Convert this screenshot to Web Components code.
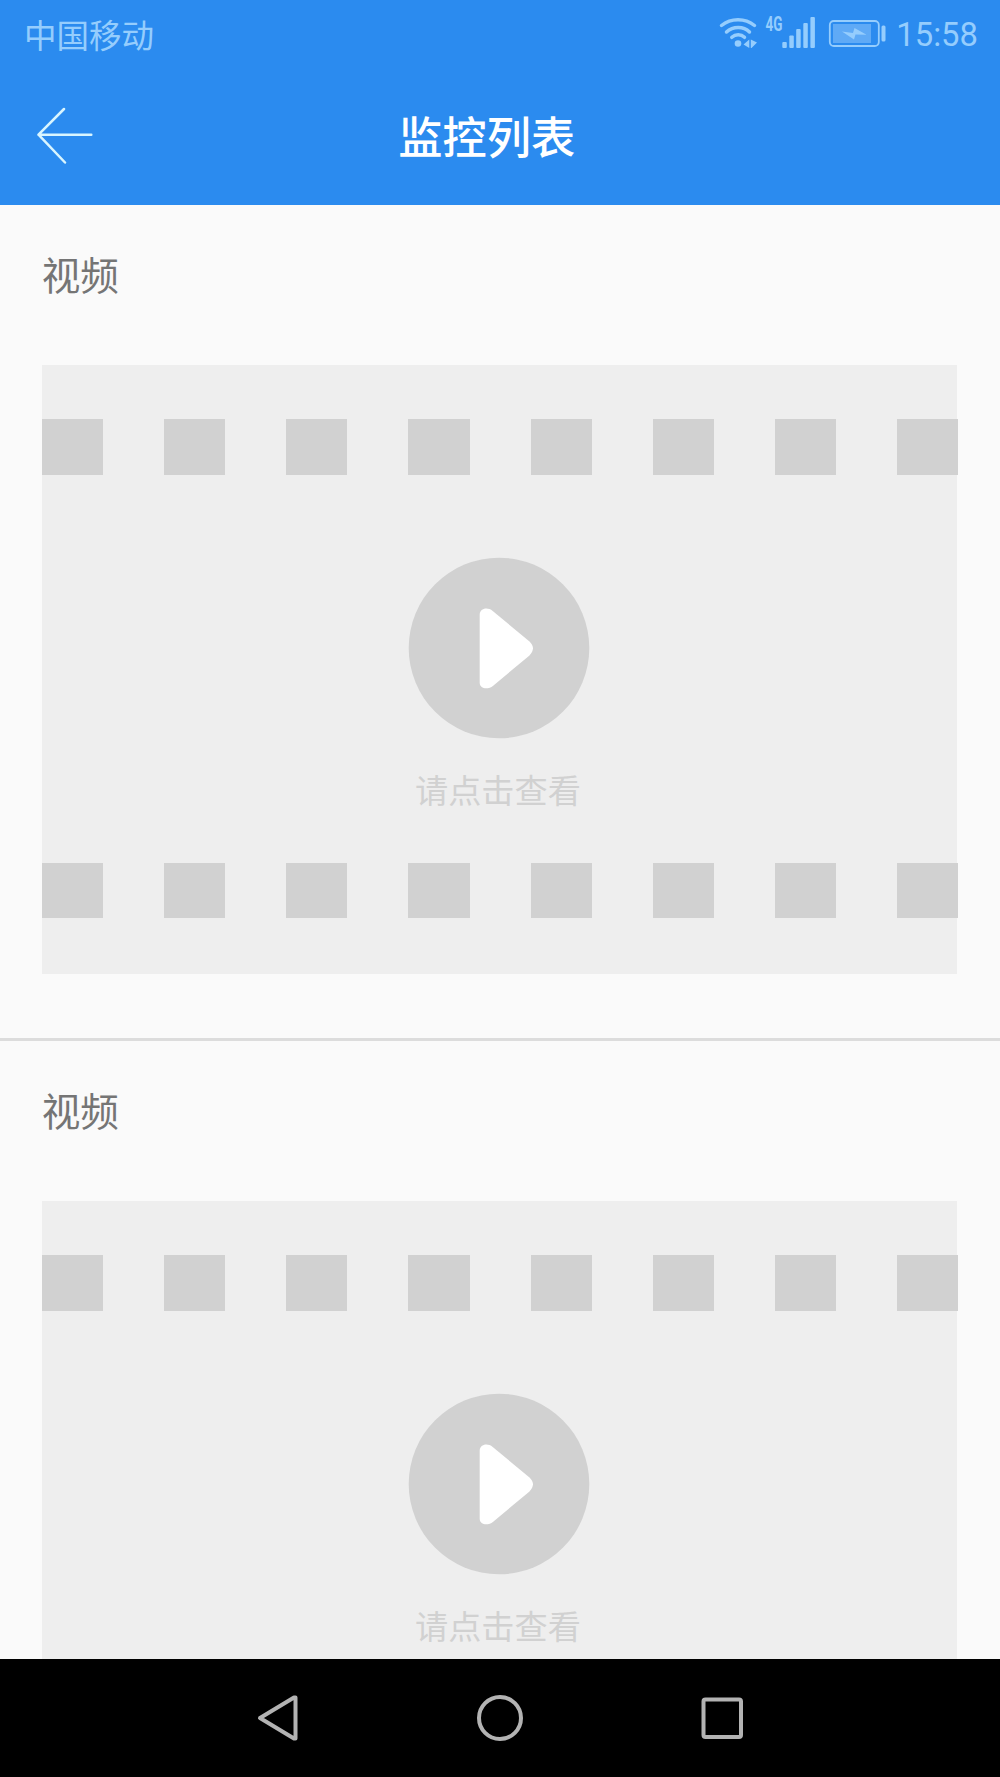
<!DOCTYPE html>
<html lang="zh-CN">
<head>
<meta charset="utf-8">
<title>监控列表</title>
<style>
html,body{margin:0;height:1777px;overflow:hidden}
body{font-family:Roboto,"Noto Sans CJK SC",sans-serif;background:#fafafa}
</style>
</head>
<body>
<monitor-app></monitor-app>
<script>
const define = (name, html) => {
  const template = document.createElement('template');
  template.innerHTML = html;
  customElements.define(name, class extends HTMLElement {
    constructor() {
      super();
      this.attachShadow({mode: 'open'}).appendChild(template.content.cloneNode(true));
    }
  });
};

define('status-bar', `
<style>
:host{display:flex;align-items:center;justify-content:space-between;height:68px;padding:0 22px 0 24px;box-sizing:border-box;color:#95cdfd}
.carrier{font:400 32.500px/48px "Noto Sans CJK SC",sans-serif;padding-bottom:1px}
.right{display:flex;align-items:center}
svg{display:block}
.time{font:400 32.800px/48px Roboto,sans-serif;margin-left:10px;padding-top:1px}
</style>
<span class="carrier"><slot name="carrier"></slot></span>
<div class="right">
<svg width="168" height="68" viewBox="718 0 168 68" fill="none" stroke="currentColor">
  <path d="M721.500 25.500C731 17.800 745 17.800 754.500 25.500M726.500 32C733 26 743.500 26 749.500 32M731.800 37.300C735.500 34 741 34 744.500 37.300" stroke-width="3.500" stroke-linecap="round"/>
  <circle cx="738" cy="43.500" r="3.300" fill="currentColor" stroke="none"/>
  <path d="M743.500 44.500L749.300 39.500V48ZM750.800 39.500L757 42.500L751.500 48H750.800Z" fill="currentColor" stroke="none"/>
  <text x="765.500" y="31.300" font-family="Roboto" font-weight="700" font-size="19.500" textLength="17" lengthAdjust="spacingAndGlyphs" fill="currentColor" stroke="none">4G</text>
  <g fill="currentColor" stroke="none"><rect x="782.300" y="42" width="4.500" height="6" rx="1"/><rect x="789.300" y="35.500" width="4.500" height="12.500" rx="1"/><rect x="796.200" y="29" width="4.500" height="19" rx="1"/><rect x="803.300" y="23" width="4.500" height="25" rx="1"/><rect x="810.400" y="17" width="4.500" height="31" rx="1"/></g>
  <rect x="829.800" y="21" width="49" height="25" rx="4" stroke-width="1.800"/>
  <rect x="833" y="24" width="38" height="19" fill="#5faaf6" stroke="none"/>
  <path d="M842 31.500L853 33L854.500 28L866.500 34.800L855.500 34.500L854 39.500Z" fill="currentColor" stroke="none"/>
  <rect x="881.500" y="25.500" width="4" height="16" rx="1.500" fill="currentColor" stroke="none"/>
</svg>
<span class="time"><slot name="time"></slot></span>
</div>`);

define('title-bar', `
<style>
:host{display:grid;grid-template-columns:1fr auto 1fr;align-items:center;height:137px;padding:0 37px 0 36px;box-sizing:border-box;color:#fff}
svg{display:block}
h1{margin:0 25.500px 0 0;padding-bottom:3px;font:500 44.200px/64px "Noto Sans CJK SC",sans-serif}
.back{padding-bottom:4px}
</style>
<svg class="back" width="57" height="58" viewBox="36 106 57 58" fill="none" stroke="#d8f5ff" stroke-width="2.500" stroke-linecap="round" stroke-linejoin="round"><path d="M91.300 134.700H38.500M64 109L38.500 134.700L65 162.500"/></svg>
<h1><slot></slot></h1><span></span>`);

define('film-strip', `
<style>
:host{display:flex;justify-content:space-between;height:55.500px}
i{width:61.300px;background:#d1d1d1}
</style><i></i><i></i><i></i><i></i><i></i><i></i><i></i><i></i>`);

define('video-placeholder', `
<style>
:host{display:flex;flex-direction:column;height:609px;width:915.500px;padding:54.900px 0 55.200px;box-sizing:border-box;background:#eee}
film-strip{width:916.800px;flex:none}
.play{flex:1;display:flex;flex-direction:column;align-items:center;padding-top:82.300px}
svg{display:block}
p{margin:26px 3px 0 0;font:400 33.200px/48px "Noto Sans CJK SC",sans-serif;color:#d1d1d1}
</style>
<film-strip></film-strip>
<div class="play">
<svg width="182" height="182" viewBox="408.300 557.300 182 182"><circle cx="499.300" cy="648.300" r="90.300" fill="#d1d1d1"/><path d="M480 615C480 609 487.500 606.800 493 611.300L529.500 641.500Q537 648.500 529.500 656L493.500 686C488 690.500 480 689 480 683Z" fill="#fff"/></svg>
<p><slot></slot></p>
</div>
<film-strip></film-strip>`);

define('video-item', `
<style>
:host{display:flex;flex-direction:column;flex:none;height:836px;padding:40px 0 0 41.700px;box-sizing:border-box;border-bottom:3px solid #dcdcdc}
h2{margin:0 0 63.500px;font:400 38.600px/56px "Noto Sans CJK SC",sans-serif;color:#757575}
</style>
<h2><slot name="title"></slot></h2>
<video-placeholder><slot name="hint"></slot></video-placeholder>`);

define('nav-bar', `
<style>
:host{display:flex;justify-content:center;align-items:center;gap:174px;height:118px}
svg{display:block}
</style>
<svg width="48" height="48" viewBox="253 1694 48 48" fill="none" stroke="#b3b3b3" stroke-width="4" stroke-linejoin="round"><path d="M259 1718L293 1697.500H294.500V1738.500H293Z"/></svg>
<svg width="48" height="48" viewBox="476 1694 48 48" fill="none" stroke="#b3b3b3" stroke-width="4"><circle cx="500" cy="1718" r="21"/></svg>
<svg width="48" height="48" viewBox="698 1694 48 48" fill="none" stroke="#b3b3b3" stroke-width="4"><rect x="703.500" y="1699.500" width="37.500" height="37.500" rx="2"/></svg>`);

define('monitor-app', `
<style>
:host{display:flex;flex-direction:column;width:1000px;height:1777px;overflow:hidden;background:#fafafa}
header{background:#2b8bef;flex:none}
main{flex:1;min-height:0;overflow:hidden;display:flex;flex-direction:column}
nav-bar{flex:none;background:#000}
</style>
<header>
<status-bar><span slot="carrier">中国移动</span><span slot="time">15:58</span></status-bar>
<title-bar>监控列表</title-bar>
</header>
<main>
<video-item><span slot="title">视频</span><span slot="hint">请点击查看</span></video-item>
<video-item><span slot="title">视频</span><span slot="hint">请点击查看</span></video-item>
</main>
<nav-bar></nav-bar>`);
</script>
</body>
</html>
